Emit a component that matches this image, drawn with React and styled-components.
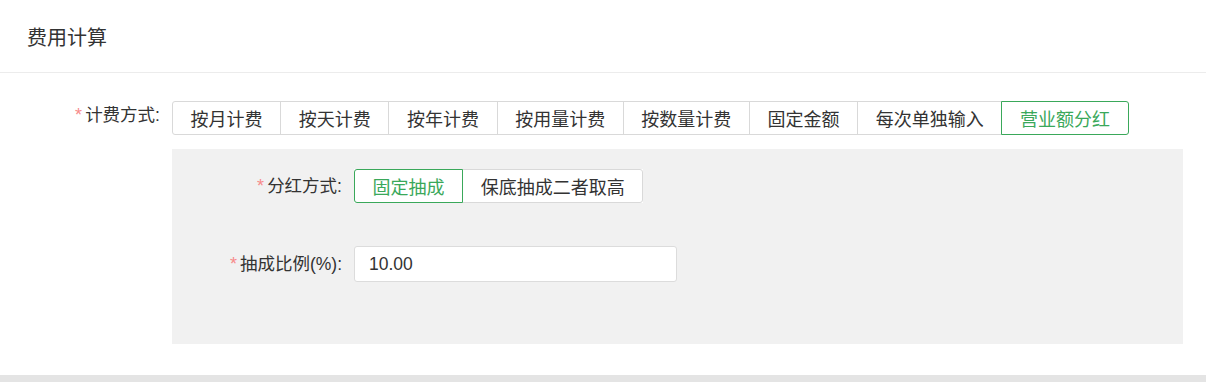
import React, { useState } from "react";
import styled, { createGlobalStyle, css } from "styled-components";

const GlobalStyle = createGlobalStyle`
  html, body {
    margin: 0;
    padding: 0;
    background: #fff;
  }
  body {
    font-family: "Liberation Sans", "Noto Sans CJK SC", sans-serif;
    color: #333;
  }
`;

const Page = styled.div`
  width: 1206px;
  display: flex;
  flex-direction: column;
`;

const Header = styled.div`
  height: 72px;
  display: flex;
  align-items: center;
  padding-left: 27px;
  font-size: 20px;
  color: #333;
  border-bottom: 1px solid #ececec;
`;

const Body = styled.div`
  padding: 28px 23px 0 0;
  display: flex;
  flex-direction: column;
`;

const Row = styled.div`
  display: flex;
  align-items: ${(p) => (p.$top ? "flex-start" : "center")};
`;

const Label = styled.div`
  width: ${(p) => p.$width}px;
  flex: none;
  text-align: right;
  margin-right: 12px;
  font-size: 17.5px;
  line-height: ${(p) => (p.$top ? "28px" : "34px")};
  color: #333;
  white-space: nowrap;
`;

const Star = styled.span`
  color: #f78a8a;
  font-size: 18px;
  margin-right: 3px;
`;

const Group = styled.div`
  display: flex;
  background: #fff;
`;

const Option = styled.button`
  height: 34px;
  padding: 0 17.6px;
  font-family: inherit;
  font-size: 18px;
  color: #333;
  background: #fff;
  border: 1px solid #d9d9d9;
  margin-left: -1px;
  cursor: pointer;
  white-space: nowrap;
  position: relative;
  &:first-child {
    margin-left: 0;
    border-radius: 3px 0 0 3px;
  }
  &:last-child {
    border-radius: 0 3px 3px 0;
  }
  ${(p) =>
    p.$active &&
    css`
      color: #3aa85a;
      border-color: #3aa85a;
      z-index: 1;
    `}
`;

const Panel = styled.div`
  margin: 14px 0 0 172px;
  width: 1011px;
  height: 195px;
  box-sizing: border-box;
  background: #f1f1f1;
  padding-top: 20px;
  display: flex;
  flex-direction: column;
  gap: 43px;
`;

const Input = styled.input`
  width: 323px;
  height: 36px;
  box-sizing: border-box;
  border: 1px solid #dcdcdc;
  border-radius: 3px;
  background: #fff;
  padding: 0 14px;
  font-family: inherit;
  font-size: 17.5px;
  color: #333;
  outline: none;
`;

const BottomBar = styled.div`
  margin-top: 31px;
  height: 8px;
  background: #e4e4e4;
`;

const feeTypes = [
  "按月计费",
  "按天计费",
  "按年计费",
  "按用量计费",
  "按数量计费",
  "固定金额",
  "每次单独输入",
  "营业额分红",
];

const shareTypes = ["固定抽成", "保底抽成二者取高"];

export default function App() {
  const [fee, setFee] = useState("营业额分红");
  const [share, setShare] = useState("固定抽成");
  const [rate, setRate] = useState("10.00");

  return (
    <Page>
      <GlobalStyle />
      <Header>费用计算</Header>
      <Body>
        <Row $top>
          <Label $width={160} $top>
            <Star>*</Star>计费方式:
          </Label>
          <Group>
            {feeTypes.map((t) => (
              <Option key={t} $active={fee === t} onClick={() => setFee(t)}>
                {t}
              </Option>
            ))}
          </Group>
        </Row>
        <Panel>
          <Row>
            <Label $width={170}>
              <Star>*</Star>分红方式:
            </Label>
            <Group>
              {shareTypes.map((t) => (
                <Option key={t} $active={share === t} onClick={() => setShare(t)}>
                  {t}
                </Option>
              ))}
            </Group>
          </Row>
          <Row>
            <Label $width={170}>
              <Star>*</Star>抽成比例(%):
            </Label>
            <Input value={rate} onChange={(e) => setRate(e.target.value)} />
          </Row>
        </Panel>
      </Body>
      <BottomBar />
    </Page>
  );
}
